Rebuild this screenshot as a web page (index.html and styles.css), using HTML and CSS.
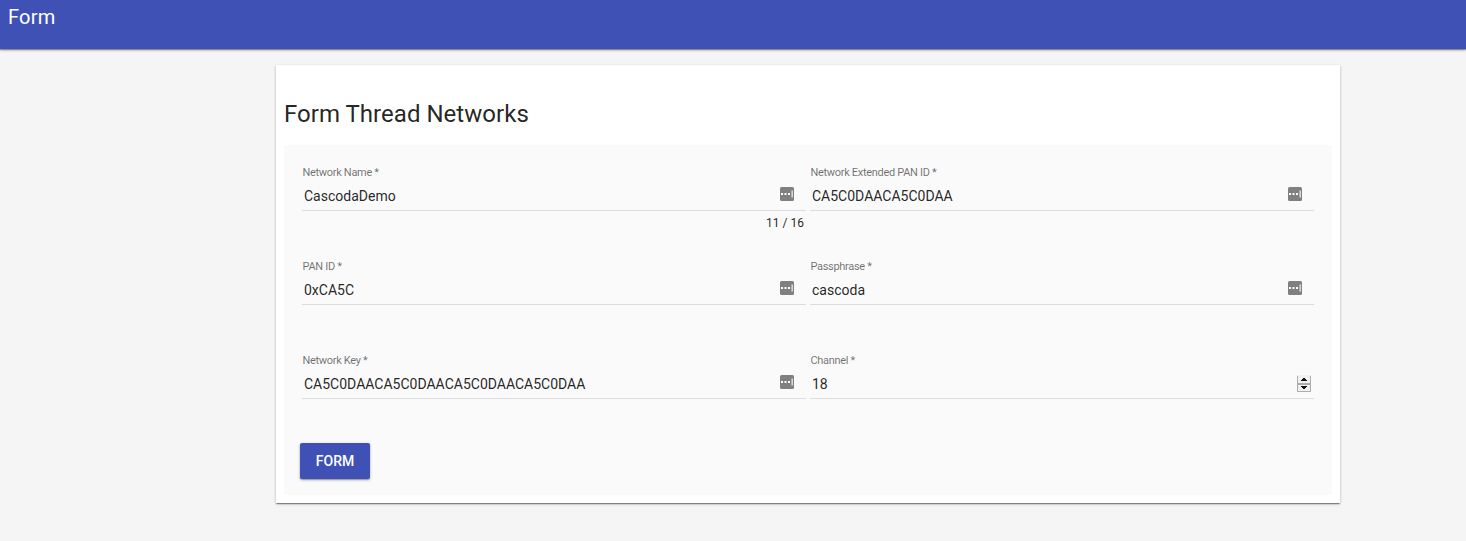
FILE: index.html
```html
<!DOCTYPE html>
<html lang="en">
<head>
<meta charset="utf-8">
<title>Form</title>
<link rel="stylesheet" href="styles.css">
</head>
<body>
<svg width="0" height="0" class="defs">
  <symbol id="key" viewBox="0 0 14 14">
    <rect width="14" height="14" rx="1.5" fill="#808080"/>
    <path d="M1 6h2v2H1zM4.5 6h2v2h-2zM8 6h2v2H8z" fill="#fff"/>
    <path d="M11.4 3.5h1.6v7h-1.6z" fill="#d8d8d8"/>
  </symbol>
</svg>
<header class="toolbar">Form</header>
<main class="card">
  <h1 class="title">Form Thread Networks</h1>
  <form class="panel">
    <div class="grid">
      <div class="field">
        <div class="label">Network Name *</div>
        <div class="control"><span class="value">CascodaDemo</span><svg class="icon"><use href="#key"/></svg></div>
        <div class="hint">11 / 16</div>
      </div>
      <div class="field">
        <div class="label">Network Extended PAN ID *</div>
        <div class="control"><span class="value">CA5C0DAACA5C0DAA</span><svg class="icon"><use href="#key"/></svg></div>
      </div>
      <div class="field">
        <div class="label">PAN ID *</div>
        <div class="control"><span class="value">0xCA5C</span><svg class="icon"><use href="#key"/></svg></div>
      </div>
      <div class="field">
        <div class="label">Passphrase *</div>
        <div class="control"><span class="value">cascoda</span><svg class="icon"><use href="#key"/></svg></div>
      </div>
      <div class="field">
        <div class="label">Network Key *</div>
        <div class="control"><span class="value">CA5C0DAACA5C0DAACA5C0DAACA5C0DAA</span><svg class="icon"><use href="#key"/></svg></div>
      </div>
      <div class="field">
        <div class="label">Channel *</div>
        <div class="control"><span class="value">18</span>
          <svg class="spinner" viewBox="0 0 14 17" shape-rendering="crispEdges">
            <rect width="14" height="17" fill="#f0f0f0"/>
            <path d="M0 1h1v16H0zM13 1h1v16h-1zM0 8h14v2H0zM0 16h14v1H0z" fill="#acacac"/>
            <path d="M6 3h2v1H6zM5 4h4v1H5zM4 5h6v1H4zM4 11h6v1H4zM5 12h4v1H5zM6 13h2v1H6z" fill="#111"/>
          </svg>
        </div>
      </div>
    </div>
    <button type="button" class="button">FORM</button>
  </form>
</main>
</body>
</html>
```
FILE: styles.css
```css
* { box-sizing: border-box; }
body {
  margin: 0;
  min-height: 541px;
  background: #f5f5f5;
  color: rgba(0, 0, 0, .87);
  font-family: Roboto, "Liberation Sans", sans-serif;
}
.defs { display: block; }
.toolbar {
  height: 49px;
  padding: 5px 8px;
  background: #3f51b5;
  color: #fff;
  font-size: 20px;
  letter-spacing: .2px;
  line-height: 24px;
  box-shadow: 0 1px 3px rgba(0, 0, 0, .3), 0 1px 1px rgba(0, 0, 0, .3);
}
.card {
  width: 1064px;
  height: 438px;
  margin: 16px 0 0 276px;
  padding: 33px 8px 8px;
  background: #fff;
  box-shadow: 0 2px 1px -1px rgba(0, 0, 0, .25), 0 1px 1px rgba(0, 0, 0, .2), 0 1px 3px rgba(0, 0, 0, .2);
}
.title {
  margin: 0 0 15px;
  font-size: 24px;
  font-weight: 400;
  letter-spacing: .03px;
  line-height: 32px;
}
.panel {
  height: 350px;
  padding: 16px 18px 0;
  background: #fafafa;
}
.grid {
  display: grid;
  grid-template-columns: 504px 504px;
  grid-auto-rows: 94px;
  column-gap: 4px;
}
.label {
  height: 20px;
  padding: 4px .5px 0;
  font-size: 11px;
  letter-spacing: -.31px;
  line-height: 16px;
  color: rgba(0, 0, 0, .57);
}
.control {
  display: flex;
  justify-content: space-between;
  height: 30px;
  padding: 6px 3px 0 2px;
  border-bottom: 1px solid #dcdcdc;
}
.value { font-size: 14px; line-height: 18px; }
.icon { width: 14px; height: 14px; margin-right: 9px; }
.spinner { width: 14px; height: 17px; }
.hint {
  padding: 5px 2px 0;
  font-size: 12px;
  line-height: 14px;
  text-align: right;
}
.button {
  display: block;
  width: 70px;
  height: 36px;
  margin-left: -2px;
  padding: 0;
  border: 0;
  border-radius: 2px;
  background: #3f51b5;
  color: #fff;
  font: 500 14px/36px Roboto, "Liberation Sans", sans-serif;
  box-shadow: 0 1px 3px rgba(0, 0, 0, .3), 0 1px 1px rgba(0, 0, 0, .2);
}
```
